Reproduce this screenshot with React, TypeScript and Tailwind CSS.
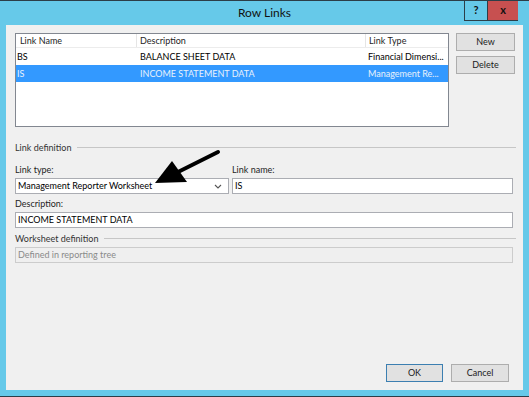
import React from 'react';

const font = { fontFamily: 'Lato, "Noto Sans", sans-serif' };

function Btn({ label, primary }: { label: string; primary?: boolean }) {
  return (
    <div
      className={
        'h-[18px] flex items-center justify-center bg-[#e1e1e1] border text-[9px] text-[#1a1a1a] ' +
        (primary ? 'border-[#3c7fb1]' : 'border-[#adadad]')
      }
    >
      {label}
    </div>
  );
}

function GroupLabel({ text }: { text: string }) {
  return (
    <div className="h-[13px] flex items-center gap-[6px]">
      <span className="text-[9px] leading-[13px] text-[#333]">{text}</span>
      <div className="flex-1 h-px bg-[#c6c6c6]" />
    </div>
  );
}

function Label({ text }: { text: string }) {
  return <div className="h-[13px] text-[9px] leading-[13px] text-[#1e1e1e]">{text}</div>;
}

function TextBox({ value, disabled }: { value: string; disabled?: boolean }) {
  return (
    <div
      className={
        'h-[16px] border flex items-center px-[2px] text-[9px] ' +
        (disabled ? 'bg-[#efefef] border-[#cccccc] text-[#8a8a8a]' : 'bg-white border-[#abadb3] text-black')
      }
    >
      {value}
    </div>
  );
}

export default function App() {
  const rows = [
    { name: 'BS', desc: 'BALANCE SHEET DATA', type: 'Financial Dimensi...' },
    { name: 'IS', desc: 'INCOME STATEMENT DATA', type: 'Management Re...', sel: true },
  ];

  return (
    <div
      className="relative w-[529px] h-[397px] bg-[#66c9e9] border-t border-b border-[#2c3e48] flex flex-col overflow-hidden"
      style={font}
    >
      {/* title bar */}
      <div className="h-[24px] flex items-start shrink-0">
        <div className="w-[65px]" />
        <div className="flex-1 text-center text-[12px] leading-[24px] text-[#111]">Row Links</div>
        <div className="flex mr-[11px]">
          <div className="w-[24px] h-[20px] border-l border-r border-b border-[#2c3e48] flex items-center justify-center text-[11px] font-bold text-[#111]">
            ?
          </div>
          <div className="w-[30px] h-[20px] bg-[#c75050] border-b border-[#2c3e48] flex items-center justify-center text-[11px] font-bold text-[#111]">
            x
          </div>
        </div>
      </div>

      {/* dialog body */}
      <div className="mx-[6px] mb-[6px] flex-1 bg-[#f0f0f0] flex flex-col pl-[9px] pr-[7px] pt-[8px] pb-[8px]">
        <div className="flex h-[94px]">
          <div className="w-[434px] border border-[#828790] bg-white flex flex-col">
            <div className="h-[14px] flex text-[9px] leading-[13px] text-[#1e1e1e] border-b border-[#ececec]">
              <div className="w-[121px] pl-[4px] border-r border-[#e5e5e5]">Link Name</div>
              <div className="w-[229px] pl-[3px] border-r border-[#e5e5e5]">Description</div>
              <div className="flex-1 pl-[3px]">Link Type</div>
            </div>
            {rows.map((r) => (
              <div
                key={r.name}
                className={
                  'h-[17px] flex items-center text-[9px] whitespace-nowrap ' +
                  (r.sel ? 'bg-[#3399ff] text-[#e8f1fb]' : 'text-black')
                }
              >
                <div className="w-[121px] pl-[1px]">{r.name}</div>
                <div className="w-[229px] pl-[3px]">{r.desc}</div>
                <div className="flex-1 pl-[2px] overflow-hidden">{r.type}</div>
              </div>
            ))}
          </div>
          <div className="ml-[7px] w-[59px] flex flex-col gap-[5px]">
            <Btn label="New" />
            <Btn label="Delete" />
          </div>
        </div>

        <div className="mt-[14px]">
          <GroupLabel text="Link definition" />
        </div>

        <div className="mt-[9px] flex gap-[3px] mr-[3px]">
          <div className="w-[214px] flex flex-col gap-[2px]">
            <Label text="Link type:" />
            <div className="h-[16px] border border-[#abadb3] bg-white flex items-center px-[2px] text-[9px] text-black">
              <span className="flex-1">Management Reporter Worksheet</span>
              <svg width="8" height="5" viewBox="0 0 8 5" className="mr-[4px]">
                <polyline points="1,1 4,4 7,1" fill="none" stroke="#555" strokeWidth="1.1" />
              </svg>
            </div>
          </div>
          <div className="flex-1 flex flex-col gap-[2px]">
            <Label text="Link name:" />
            <TextBox value="IS" />
          </div>
        </div>

        <div className="mt-[3px] mr-[3px] flex flex-col gap-[2px]">
          <Label text="Description:" />
          <TextBox value="INCOME STATEMENT DATA" />
        </div>

        <div className="mt-[4px]">
          <GroupLabel text="Worksheet definition" />
        </div>
        <div className="mt-[2px] mr-[3px]">
          <TextBox value="Defined in reporting tree" disabled />
        </div>

        <div className="flex-1" />
        <div className="flex justify-end gap-[8px] mr-[7px]">
          <div className="w-[57px]">
            <Btn label="OK" primary />
          </div>
          <div className="w-[58px]">
            <Btn label="Cancel" />
          </div>
        </div>
      </div>

      {/* annotation arrow */}
      <svg className="absolute left-0 top-0 pointer-events-none" width="529" height="397">
        <line x1="218" y1="151" x2="178" y2="171" stroke="#000" strokeWidth="4" strokeLinecap="round" />
        <polygon points="155,182 172,160 187,181" fill="#000" />
      </svg>
    </div>
  );
}
